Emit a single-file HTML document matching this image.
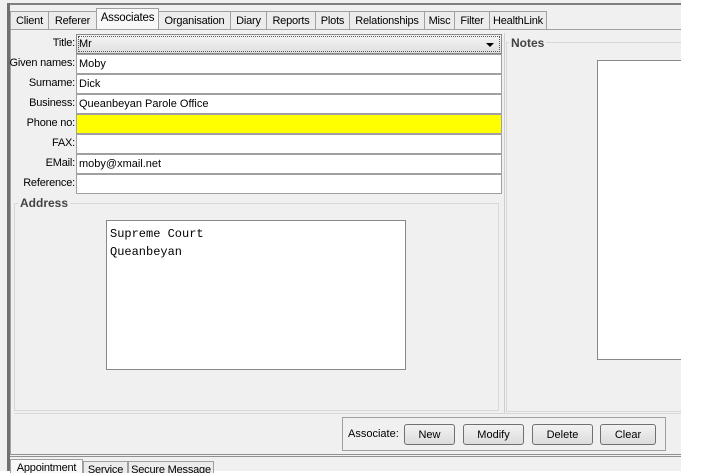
<!DOCTYPE html>
<html><head><style>
*{box-sizing:border-box;margin:0;padding:0}
body{width:701px;height:471px;background:#fff;font-family:"Liberation Sans",sans-serif;font-size:11px;color:#000;position:relative;overflow:hidden}
.a{position:absolute}
.tab{position:absolute;top:11px;height:18px;border:1px solid #a0a0a0;border-bottom:none;background:#ececec;padding-top:3px;text-align:center;white-space:nowrap;overflow:hidden;letter-spacing:-0.2px}
.lbl{position:absolute;right:626px;text-align:right;white-space:nowrap;letter-spacing:-0.2px}
.fld{position:absolute;left:76px;width:426px;height:20px;border:1px solid #a0a0a0;background:#fff;padding:3px 2px 0}
.btn{position:absolute;top:424px;height:21px;border:1px solid #707070;border-radius:3px;background:linear-gradient(#f2f2f2,#dcdcdc);text-align:center;padding-top:4px}
</style></head><body>
<div class="a" style="left:0;top:0;width:681px;height:471px;background:#f0f0f0"></div>
<div class="a" style="left:8px;top:3px;width:673px;height:2px;background:#808080"></div>
<div class="a" style="left:7px;top:3px;width:3px;height:468px;background:#707070"></div>
<div class="tab" style="left:10px;width:39px">Client</div>
<div class="tab" style="left:48px;width:49px">Referer</div>
<div class="tab" style="left:96px;width:63px;top:8px;height:22px;background:#f8f8f8;font-size:11.5px">Associates</div>
<div class="tab" style="left:158px;width:73px">Organisation</div>
<div class="tab" style="left:230px;width:37px">Diary</div>
<div class="tab" style="left:266px;width:50px">Reports</div>
<div class="tab" style="left:315px;width:35px">Plots</div>
<div class="tab" style="left:349px;width:76px">Relationships</div>
<div class="tab" style="left:424px;width:31px">Misc</div>
<div class="tab" style="left:454px;width:36px">Filter</div>
<div class="tab" style="left:489px;width:58px">HealthLink</div>
<div class="a" style="left:10px;top:29px;width:671px;height:1px;background:#a0a0a0"></div>
<div class="a" style="left:10px;top:30px;width:1px;height:425px;background:#a0a0a0"></div>
<div class="a" style="left:10px;top:454px;width:671px;height:1px;background:#909090"></div>
<div class="a" style="left:10px;top:456px;width:671px;height:1px;background:#909090"></div>

<div class="lbl" style="top:37px">Title:</div>
<div class="fld" style="top:34px;background:linear-gradient(#f4f4f4,#e0e0e0);border-color:#888;outline:1px dotted #555;outline-offset:-3px">Mr<span class="a" style="right:7px;top:8px;border:4px solid transparent;border-top:4px solid #000;border-bottom:none"></span></div>
<div class="lbl" style="top:57px">Given names:</div><div class="fld" style="top:54px">Moby</div>
<div class="lbl" style="top:77px">Surname:</div><div class="fld" style="top:74px">Dick</div>
<div class="lbl" style="top:97px">Business:</div><div class="fld" style="top:94px">Queanbeyan Parole Office</div>
<div class="lbl" style="top:117px">Phone no:</div><div class="fld" style="top:114px;background:#ffff00"></div>
<div class="lbl" style="top:137px">FAX:</div><div class="fld" style="top:134px"></div>
<div class="lbl" style="top:157px">EMail:</div><div class="fld" style="top:154px">moby@xmail.net</div>
<div class="lbl" style="top:177px">Reference:</div><div class="fld" style="top:174px"></div>

<div class="a" style="left:14px;top:203px;width:485px;height:208px;border:1px solid #d8d8d8"></div>
<div class="a" style="left:18px;top:196px;background:#f0f0f0;padding:0 2px;font-weight:bold;color:#444;font-size:12px">Address</div>
<div class="a" style="left:106px;top:220px;width:300px;height:150px;border:1px solid #888;background:#fff;font-family:'Liberation Mono',monospace;font-size:12px;line-height:18px;padding:4px 3px">Supreme Court<br>Queanbeyan</div>

<div class="a" style="left:504px;top:33px;width:1px;height:380px;background:#d0d0d0"></div>
<div class="a" style="left:506px;top:42px;width:175px;height:370px;border:1px solid #d8d8d8;border-right:none"></div>
<div class="a" style="left:509px;top:36px;background:#f0f0f0;padding:0 2px;font-weight:bold;color:#444;font-size:12px">Notes</div>
<div class="a" style="left:597px;top:60px;width:84px;height:300px;border:1px solid #888;border-right:none;background:#fff"></div>

<div class="a" style="left:14px;top:413px;width:667px;height:1px;background:#d8d8d8"></div>
<div class="a" style="left:342px;top:417px;width:324px;height:34px;border:1px solid #a0a0a0"></div>
<div class="a" style="left:348px;top:428px">Associate:</div>
<div class="btn" style="left:404px;width:51px">New</div>
<div class="btn" style="left:463px;width:61px">Modify</div>
<div class="btn" style="left:532px;width:61px">Delete</div>
<div class="btn" style="left:600px;width:56px">Clear</div>

<div class="tab" style="left:10px;width:73px;top:459px;height:14px;background:#f8f8f8;padding-top:2px">Appointment</div>
<div class="tab" style="left:83px;width:45px;top:461px;height:12px;padding-top:2px">Service</div>
<div class="tab" style="left:128px;width:86px;top:461px;height:12px;padding-top:2px">Secure Message</div>
</body></html>
